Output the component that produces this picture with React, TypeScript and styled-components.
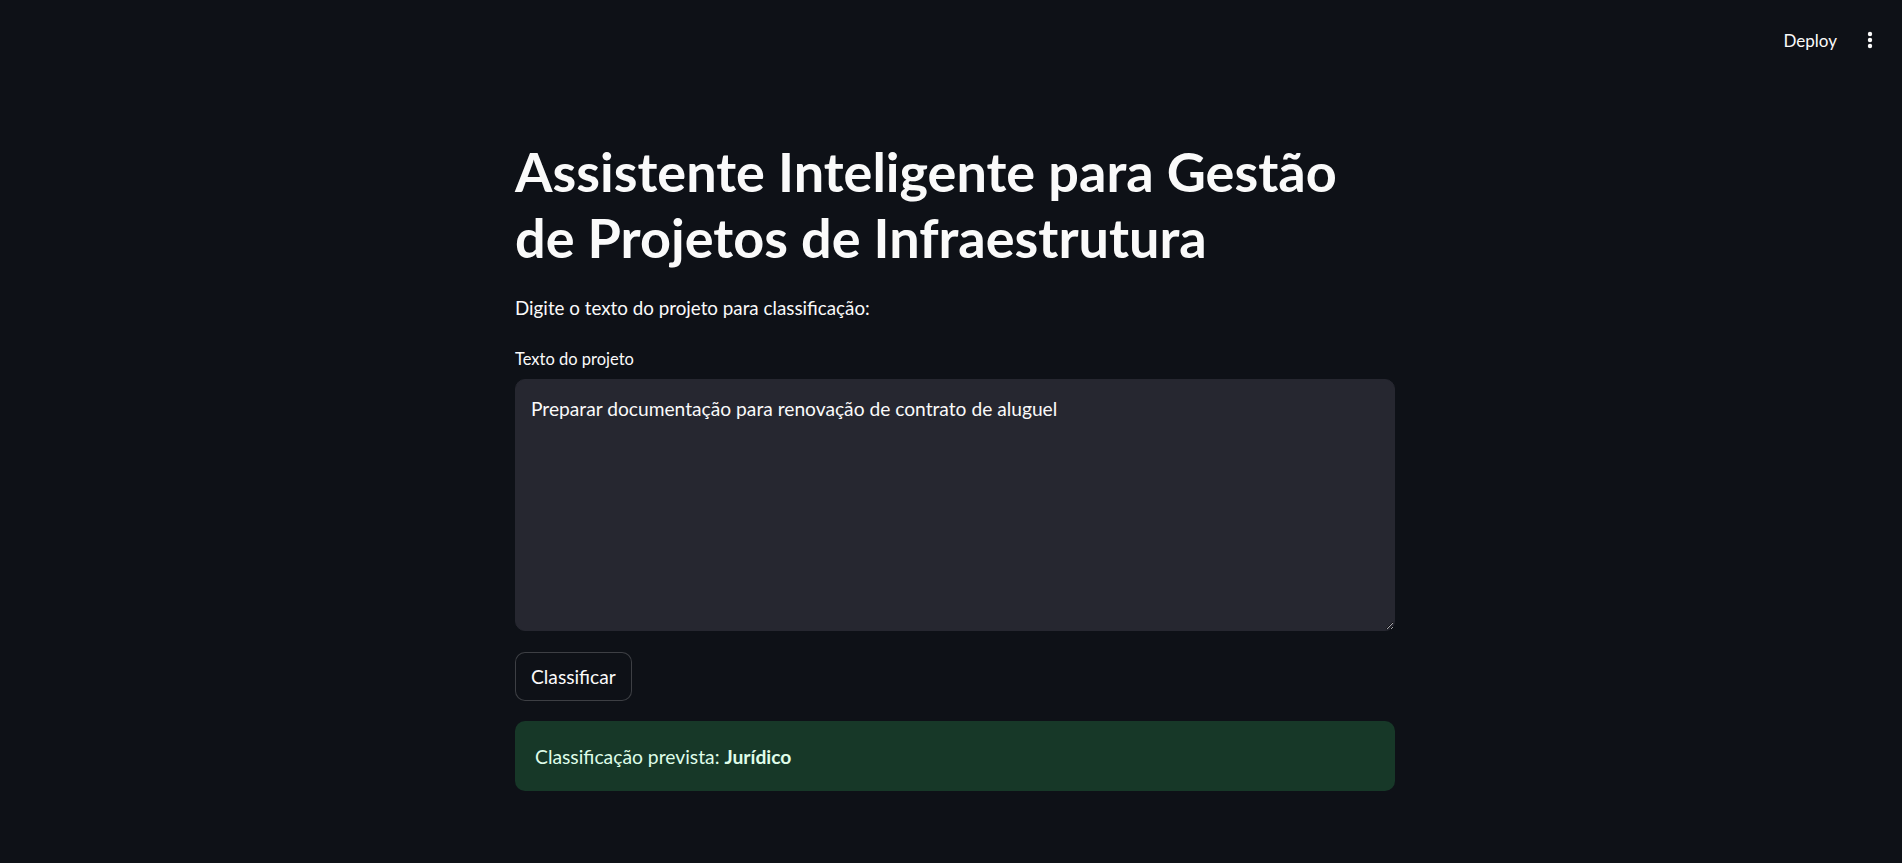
import React from "react";
import styled, { createGlobalStyle } from "styled-components";

const GlobalStyle = createGlobalStyle`
  html, body {
    margin: 0;
    padding: 0;
    background: #0e1117;
  }
  body {
    font-family: Lato, "Noto Sans", sans-serif;
    color: #fafafa;
  }
  * { box-sizing: border-box; }
`;

const Page = styled.div`
  min-height: 863px;
  background: #0e1117;
  display: flex;
  flex-direction: column;
`;

const Header = styled.header`
  height: 80px;
  margin-bottom: 2px;
  display: flex;
  align-items: center;
  justify-content: flex-end;
  gap: 23px;
  padding-right: 22px;
`;

const DeployButton = styled.button`
  background: transparent;
  border: none;
  color: #fafafa;
  font-family: inherit;
  font-size: 17px;
  padding: 0;
  cursor: pointer;
`;

const MenuButton = styled.button`
  background: transparent;
  border: none;
  padding: 0;
  width: 20px;
  height: 30px;
  display: flex;
  align-items: center;
  justify-content: center;
  color: #fafafa;
`;

const Main = styled.main`
  padding-left: 8px;
  display: flex;
  justify-content: center;
`;

const Column = styled.div`
  width: 880px;
  display: flex;
  flex-direction: column;
`;

const Title = styled.h1`
  margin: 57px 0 0;
  font-size: 54px;
  line-height: 66px;
  font-weight: 700;
  color: #fafafa;
`;

const Paragraph = styled.p`
  margin: 21px 0 0;
  font-size: 18.8px;
  line-height: 32px;
`;

const Label = styled.label`
  margin-top: 21px;
  font-size: 16.5px;
  line-height: 28px;
  margin-bottom: 6px;
`;

const TextArea = styled.textarea`
  width: 880px;
  height: 252px;
  background: #262730;
  border: 1px solid #262730;
  border-radius: 10px;
  color: #fafafa;
  font-family: inherit;
  font-size: 19.2px;
  line-height: 28px;
  padding: 15px 15px 14px;
  resize: vertical;
  outline: none;
`;

const Button = styled.button`
  margin-top: 21px;
  align-self: flex-start;
  height: 49px;
  padding: 0 15px;
  background: #0e1117;
  border: 1px solid rgba(250, 250, 250, 0.2);
  border-radius: 10px;
  color: #fafafa;
  font-family: inherit;
  font-size: 19.2px;
  cursor: pointer;
`;

const Alert = styled.div`
  margin-top: 20px;
  height: 70px;
  border-radius: 10px;
  background: #173828;
  color: #dffde9;
  display: flex;
  align-items: center;
  padding: 0 20px;
  font-size: 19.3px;
`;

export default function App() {
  return (
    <Page>
      <GlobalStyle />
      <Header>
        <DeployButton>Deploy</DeployButton>
        <MenuButton aria-label="menu">
          <svg width="6" height="18" viewBox="0 0 6 18">
            <circle cx="3" cy="3" r="2.2" fill="#fafafa" />
            <circle cx="3" cy="9" r="2.2" fill="#fafafa" />
            <circle cx="3" cy="15" r="2.2" fill="#fafafa" />
          </svg>
        </MenuButton>
      </Header>
      <Main>
        <Column>
          <Title>
            Assistente Inteligente para Gestão
            <br />
            de Projetos de Infraestrutura
          </Title>
          <Paragraph>Digite o texto do projeto para classificação:</Paragraph>
          <Label>Texto do projeto</Label>
          <TextArea defaultValue="Preparar documentação para renovação de contrato de aluguel" />
          <Button>Classificar</Button>
          <Alert>
            <span>
              Classificação prevista: <strong>Jurídico</strong>
            </span>
          </Alert>
        </Column>
      </Main>
    </Page>
  );
}
